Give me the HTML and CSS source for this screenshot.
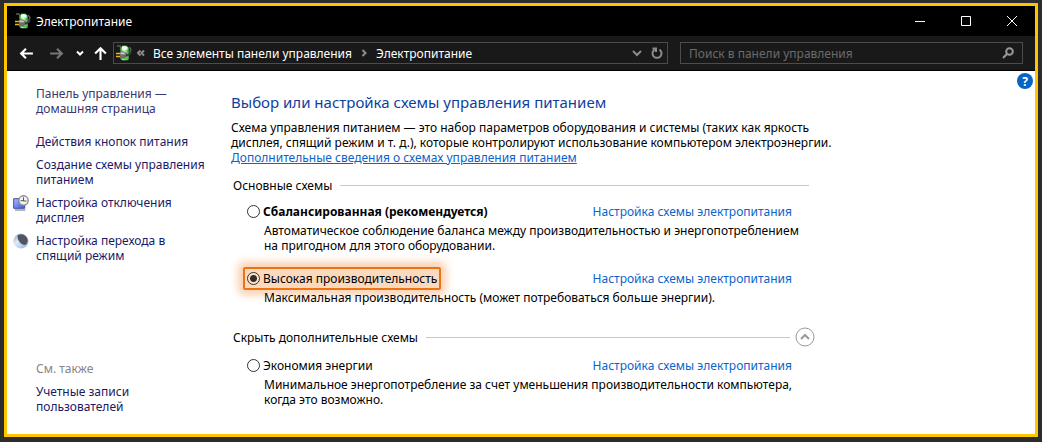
FILE: index.html
```html
<!DOCTYPE html>
<html lang="ru">
<head>
<meta charset="utf-8">
<meta name="viewport" content="width=device-width, initial-scale=1">
<title>Электропитание</title>
<link rel="stylesheet" href="styles.css">
</head>
<body>
<svg class="defs" aria-hidden="true">
  <defs>
    <linearGradient id="cell" x1="0" x2="1">
      <stop offset="0" stop-color="#35b52f"/><stop offset="0.45" stop-color="#d9ffd0"/><stop offset="1" stop-color="#1e8b2c"/>
    </linearGradient>
    <linearGradient id="screen" x1="0" y1="0" x2="1" y2="1">
      <stop offset="0" stop-color="#aebcff"/><stop offset="1" stop-color="#3a55d8"/>
    </linearGradient>
    <linearGradient id="night" x1="0" x2="1" y2="1">
      <stop offset="0" stop-color="#8fa3c4"/><stop offset="0.4" stop-color="#dfeaf8"/><stop offset="1" stop-color="#8aaee0"/>
    </linearGradient>
    <symbol id="power" viewBox="0 0 16 16">
      <path d="M1 1h3l1.500 2.500L4 5M13 2l2 2.500-1.500 3.500" fill="none" stroke="#5c5c5c" stroke-width="1.500"/>
      <path d="M4.500 3 6 1.500V.7h5v.8L13 3v11l-1 1.300H6L4.500 14z" fill="url(#cell)"/>
      <path d="M6 1.700h5.500v3H6z" fill="#f1fff0"/>
      <path d="M7 13.800 11 10l-1 2h2.500l-3 3.300z" fill="#45d53d"/>
      <path d="M0 8.500h5M0 11.500h5" stroke="#e5b62b" stroke-width="1.300"/>
      <path d="M4 6.500h4l3 2v3l-3 2H4z" fill="#6f6d6a"/>
      <path d="M4.500 7.500h3.500l1.500 1.700h-5z" fill="#d2d0cc"/>
      <path d="M10 10c2 1 3.500-.5 5-3" fill="none" stroke="#3a3a3a" stroke-width="2"/>
    </symbol>
  </defs>
</svg>
<div class="window">
  <header class="titlebar">
    <svg class="app-icon"><use href="#power"/></svg>
    <span class="title">Электропитание</span>
    <button class="caption" aria-label="Свернуть"><svg viewBox="0 0 12 12"><path d="M1 6.500h10"/></svg></button>
    <button class="caption" aria-label="Развернуть"><svg viewBox="0 0 12 12"><path d="M1.500 1.500h9v9h-9z"/></svg></button>
    <button class="caption" aria-label="Закрыть"><svg viewBox="0 0 12 12"><path d="m1 1 10 10M11 1 1 11"/></svg></button>
  </header>
  <nav class="toolbar" aria-label="Навигация">
    <div class="history">
      <button aria-label="Назад"><svg class="arrow" viewBox="0 0 14 14"><path d="M13 7H2M6.500 2.500 2 7l4.500 4.500"/></svg></button>
      <button class="dim" aria-label="Вперед"><svg class="arrow" viewBox="0 0 14 14"><path d="M1 7h11M7.500 2.500 12 7l-4.500 4.500"/></svg></button>
      <button aria-label="Последние расположения"><svg class="small" viewBox="0 0 8 8"><path d="m1 2.500 3 3 3-3"/></svg></button>
      <button aria-label="Вверх"><svg class="arrow" viewBox="0 0 14 14"><path d="M7 13V2M2 7l5-5 5 5"/></svg></button>
    </div>
    <div class="address">
      <svg class="app-icon"><use href="#power"/></svg>
      <svg class="mark" viewBox="0 0 8 8"><path d="M3.500 1.500 1 4l2.500 2.500M7 1.500 4.500 4 7 6.500"/></svg>
      <a href="#">Все элементы панели управления</a>
      <svg class="mark next" viewBox="0 0 8 8"><path d="M2.500 1 5.500 4l-3 3"/></svg>
      <a href="#">Электропитание</a>
      <button class="end" aria-label="Предыдущие расположения"><svg class="tool" viewBox="0 0 12 12"><path d="m2 4 4 4 4-4"/></svg></button>
      <button aria-label="Обновить"><svg class="tool" viewBox="0 0 12 12"><path d="M8.500 2.600A4.500 4.500 0 1 1 3.500 2.600M1.500 1.500h3.500V5"/></svg></button>
    </div>
    <div class="search">
      <input type="search" placeholder="Поиск в панели управления" aria-label="Поиск в панели управления">
      <button aria-label="Найти"><svg class="tool" viewBox="0 0 12 12"><circle cx="7.500" cy="4.500" r="3.300"/><path d="M5.200 6.800 1 11"/></svg></button>
    </div>
  </nav>
  <div class="content">
    <aside class="sidebar">
      <a class="home" href="#">Панель управления —<br>домашняя страница</a>
      <a href="#">Действия кнопок питания</a>
      <a href="#">Создание схемы управления питанием</a>
      <a class="task" href="#">
        <svg viewBox="0 0 16 16"><path d="M.7 3.700h11v9.600H.7z" fill="url(#screen)" stroke="#3a4fae"/><path d="M2 15h10.500" stroke="#8c8c8c" stroke-width="1.300"/><circle cx="10.500" cy="5.500" r="4.700" fill="#f4f4ee" stroke="#878b91" stroke-width="1.400"/><path d="M10.500 2.300V6h3M7.500 5.700h3" fill="none" stroke="#505861"/></svg>
        <span>Настройка отключения<br>дисплея</span>
      </a>
      <a class="task" href="#">
        <svg viewBox="0 0 16 16"><circle cx="8" cy="8" r="7.600" fill="url(#night)"/><path d="M4.500 2.500C8 0 13 1.500 14.500 6c.8 3-.5 5-2.500 6-4 0-8-5-7.500-9.500z" fill="#525461"/></svg>
        <span>Настройка перехода в<br>спящий режим</span>
      </a>
      <span class="also">См. также</span>
      <a href="#">Учетные записи<br>пользователей</a>
    </aside>
    <main class="main">
      <h1>Выбор или настройка схемы управления питанием</h1>
      <p class="intro">Схема управления питанием — это набор параметров оборудования и системы (таких как яркость<br>дисплея, спящий режим и т. д.), которые контролируют использование компьютером электроэнергии.<br><a href="#">Дополнительные сведения о схемах управления питанием</a></p>
      <section class="group">
        <h2>Основные схемы</h2>
        <div class="scheme">
          <div class="row">
            <label class="strong"><input type="radio" name="plan">Сбалансированная (рекомендуется)</label>
            <a href="#">Настройка схемы электропитания</a>
          </div>
          <p>Автоматическое соблюдение баланса между производительностью и энергопотреблением<br>на пригодном для этого оборудовании.</p>
        </div>
        <div class="scheme">
          <div class="row">
            <label class="marked"><input type="radio" name="plan" checked>Высокая производительность</label>
            <a href="#">Настройка схемы электропитания</a>
          </div>
          <p>Максимальная производительность (может потребоваться больше энергии).</p>
        </div>
      </section>
      <section class="group extra">
        <div class="heading">
          <h2>Скрыть дополнительные схемы</h2>
          <button class="toggle" aria-label="Скрыть дополнительные схемы"><svg viewBox="0 0 20 20"><circle cx="10" cy="10" r="9"/><path d="m6 12 4-4 4 4"/></svg></button>
        </div>
        <div class="scheme">
          <div class="row">
            <label><input type="radio" name="plan">Экономия энергии</label>
            <a href="#">Настройка схемы электропитания</a>
          </div>
          <p>Минимальное энергопотребление за счет уменьшения производительности компьютера,<br>когда это возможно.</p>
        </div>
      </section>
    </main>
    <button class="help" aria-label="Справка">?</button>
  </div>
</div>
</body>
</html>
```
FILE: styles.css
```css
* { box-sizing: border-box; }

body {
  margin: 0;
  padding: 3px 4px 5px;
  min-height: 100vh;
  display: flex;
  background: #2c2c2c;
  color: #000;
  font: 12px/15px "Noto Sans", "Open Sans", sans-serif;
}

h1, h2, p { margin: 0; font-weight: 400; }
a { color: #0a64cc; text-decoration: none; }
button { padding: 0; border: 0; background: none; color: inherit; font: inherit; }
svg { flex: none; display: block; }
.defs { position: absolute; width: 0; height: 0; }

.window {
  flex: 1;
  min-width: 0;
  display: flex;
  flex-direction: column;
  border: 3px solid #ffc400;
  background: #fff;
}

.titlebar {
  display: flex;
  align-items: center;
  height: 30px;
  padding-left: 8px;
  background: #000;
  color: #fff;
}
.app-icon { width: 16px; height: 16px; }
.title { flex: 1; padding-left: 5px; }
.caption { width: 46px; height: 28px; display: grid; place-items: center; }
.caption svg { width: 12px; height: 12px; fill: none; stroke: #fff; }

.toolbar {
  display: flex;
  align-items: center;
  height: 35px;
  padding: 0 12px 0 4px;
  background: #191919;
  border-bottom: 1px solid #000;
  color: #fff;
}
.toolbar svg:not(.app-icon) { fill: none; stroke: currentColor; stroke-width: 2; }
.history {
  display: grid;
  grid-template-columns: 30px 30px 18px 22px;
  place-items: center;
  margin-right: 2px;
}
.history .dim { color: #777; }
.arrow { width: 15px; height: 15px; }
.toolbar .small { width: 8px; height: 8px; }

.address, .search {
  display: flex;
  align-items: center;
  height: 22px;
  border: 1px solid #4c4c4c;
}
.address { flex: 547; padding: 0 4px 0 2px; }
.address a { color: #fff; }
.address button, .mark { color: #8c8c8c; }
.mark { width: 8px; height: 8px; margin: 0 8px 0 5px; }
.toolbar .mark { stroke-width: 1; }
.mark.next { margin: 0 8px; }
.toolbar .next { stroke-width: 2; }
.tool { width: 12px; height: 12px; }
.address .end { margin-left: auto; margin-right: 8px; }
.search { flex: 325; margin-left: 12px; padding: 0 8px; color: #999; }
.search input {
  flex: 1;
  min-width: 0;
  padding: 0;
  border: 0;
  outline: 0;
  background: none;
  color: #fff;
  font: inherit;
}
.search input::placeholder { color: #6b6b6b; opacity: 1; }

.content { flex: 1; display: flex; position: relative; }
.sidebar {
  flex: none;
  width: 224px;
  display: flex;
  flex-direction: column;
  gap: 8px;
  padding: 15px 20px 20px 29px;
}
.sidebar a { color: #1a1a66; }
.sidebar .home { margin-bottom: 10px; color: #39396e; }
.task { display: flex; gap: 7px; margin-left: -23px; }
.task svg { width: 16px; height: 16px; }
.also { margin-top: auto; color: #858585; }

.main { flex: 1; max-width: 584px; padding-top: 20px; }
h1 { color: #0f3f9e; font-size: 15px; line-height: 22px; }
.intro { margin-top: 7px; white-space: nowrap; }
.intro a { text-decoration: underline; }

.group { margin-top: 13px; padding-left: 2px; }
.group h2 { flex: 1; display: flex; align-items: center; gap: 8px; font-size: 12px; }
.group h2::after { content: ""; flex: 1; height: 1px; background: #c8c8c8; }
.group > h2 { margin: 0 6px 7px 0; }
.extra { margin-top: 22px; }
.heading { display: flex; align-items: center; gap: 5px; margin-bottom: 7px; }
.toggle svg { width: 20px; height: 20px; fill: none; stroke: #999; }
.toggle path { stroke-width: 2; }

.scheme { padding: 0 23px 0 10px; }
.scheme + .scheme { margin-top: 14px; }
.row { display: flex; align-items: center; justify-content: space-between; }
.scheme label {
  display: flex;
  align-items: center;
  gap: 3px;
  padding: 2px;
  border: 2px solid transparent;
  border-radius: 2px;
}
.scheme .strong { font-weight: 700; }
.scheme .marked {
  border-color: #ed7414;
  background: #fbd9bd;
  box-shadow: 0 0 8px 5px #fbcfae;
}
.scheme p { position: relative; padding-left: 21px; white-space: nowrap; }
.scheme input {
  appearance: none;
  flex: none;
  width: 13px;
  height: 13px;
  margin: 0;
  border: 1px solid #333;
  border-radius: 50%;
  background: #fff;
}
.scheme input:checked {
  background: radial-gradient(circle, #3a2b22 3px, #fbe3cf 4px);
}

.help {
  position: absolute;
  top: 2px;
  right: 2px;
  width: 16px;
  height: 16px;
  border-radius: 50%;
  background: #0864c4;
  color: #fff;
  font-weight: 700;
}
```
